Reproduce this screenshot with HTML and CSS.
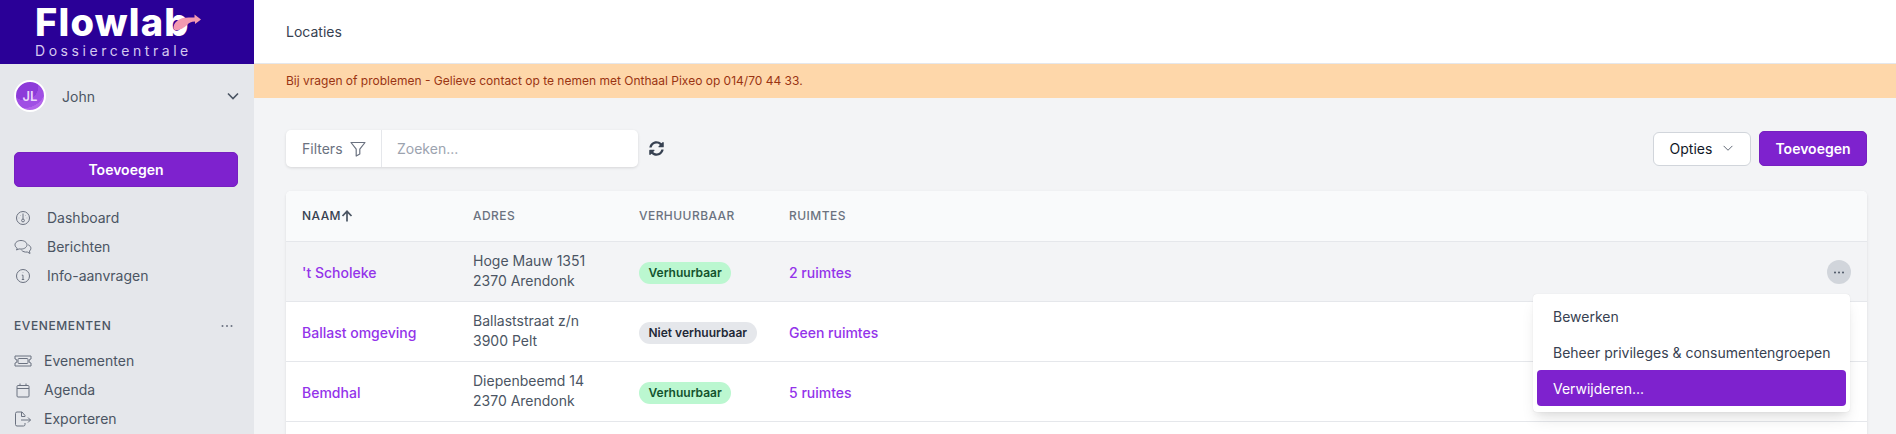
FILE: index.html
```html
<!DOCTYPE html>
<html lang="nl">
<head>
<meta charset="utf-8">
<title>Locaties</title>
<link rel="stylesheet" href="styles.css">
</head>
<body>
<div class="app">
  <aside class="sidebar">
    <div class="brand">
      <div class="brand-name">Flowlab<svg class="brand-arrow" viewBox="0 0 28 18" width="28" height="18"><path d="M.5 14C.5 8 6 5 10 4C14 3 17 3.500 21.500 3.500V.5L28 5.500L22 10V7.500C18 7.500 16 9 14 11C10 15 1.500 19 .5 14Z" fill="#f49ab0"/></svg></div>
      <div class="brand-sub">Dossiercentrale</div>
    </div>
    <div class="user">
      <span class="avatar">JL</span>
      <span class="user-name">John</span>
      <svg class="user-chev" viewBox="0 0 12 8" width="12" height="8"><path d="M1 1.500L6 6.500L11 1.500" fill="none" stroke="#4b5563" stroke-width="1.600"/></svg>
    </div>
    <button class="btn btn-primary btn-side">Toevoegen</button>
    <nav class="nav nav-first">
      <a class="nav-item"><svg class="ic" viewBox="0 0 16 16"><circle cx="8" cy="8" r="6.500"/><path d="M8 3.500V9M5 5l.3.3M11 5l-.3.3M3.800 8h.4M11.800 8h.4"/><circle cx="8" cy="10.500" r="1.400"/></svg>Dashboard</a>
      <a class="nav-item"><svg class="ic ic-wide" viewBox="0 0 18 16"><path d="M7 1.500C3.700 1.500 1 3.400 1 5.800c0 1.400.9 2.600 2.200 3.400L2.500 11l2.600-1.100c.6.1 1.200.2 1.900.2 3.300 0 6-1.900 6-4.300S10.300 1.500 7 1.500Z"/><path d="M14.200 5.800c1.600.8 2.700 2 2.700 3.500 0 1.100-.6 2.100-1.500 2.800l.6 2.400-2.700-1.500c-2.300.4-4.600-.4-5.800-1.800"/></svg>Berichten</a>
      <a class="nav-item"><svg class="ic" viewBox="0 0 16 16"><circle cx="8" cy="8" r="6.500"/><path d="M8 7.200V11.500M6.800 7.200H8M6.800 11.500H9.200M8 4.600v.4"/></svg>Info-aanvragen</a>
    </nav>
    <div class="section-head"><span>EVENEMENTEN</span><svg viewBox="0 0 12 4" width="12" height="4"><circle cx="1.500" cy="2" r="1" class="dot-fill"/><circle cx="6" cy="2" r="1" class="dot-fill"/><circle cx="10.500" cy="2" r="1" class="dot-fill"/></svg></div>
    <nav class="nav nav-events">
      <a class="nav-item nav-item-tight"><svg class="ic ic-wide" viewBox="0 0 18 14"><path d="M1 2h16v3a2 2 0 0 0 0 4v3H1V9a2 2 0 0 0 0-4Z"/><rect x="4" y="4.500" width="10" height="5" rx="1"/></svg>Evenementen</a>
      <a class="nav-item nav-item-tight"><svg class="ic" viewBox="0 0 16 16"><rect x="2" y="3.500" width="12" height="11.500" rx="1"/><path d="M2 6.500H14M5 1.500V3.500M11 1.500V3.500"/></svg>Agenda</a>
      <a class="nav-item nav-item-tight"><svg class="ic ic-wide" viewBox="0 0 18 16"><path d="M11 5.500V4.500L8 1H3a1.500 1.500 0 0 0-1.500 1.500v11A1.500 1.500 0 0 0 3 15h6.500A1.500 1.500 0 0 0 11 13.500V12"/><path d="M7.500 1v4.500H11M7 9H16.500M14 6.500L16.500 9L14 11.500"/></svg>Exporteren</a>
    </nav>
  </aside>
  <main class="main">
    <header class="topbar">Locaties</header>
    <div class="banner">Bij vragen of problemen - Gelieve contact op te nemen met Onthaal Pixeo op 014/70 44 33.</div>
    <div class="content">
      <div class="toolbar">
        <div class="search">
          <div class="filters">Filters<svg viewBox="0 0 16 16" width="16" height="16"><path d="M1 1.500H15L9.800 8.200V13L6.200 15V8.200Z" fill="none" stroke="#6b7280" stroke-width="1.200" stroke-linejoin="round"/></svg></div>
          <div class="search-input">Zoeken...</div>
        </div>
        <svg class="refresh" viewBox="0 0 512 512" width="15" height="15"><path fill="#374151" d="M370.720 133.280C339.458 104.008 298.888 87.962 255.848 88c-77.458.068-144.328 53.178-162.791 126.850-1.344 5.363-6.122 9.150-11.651 9.150H24.103c-7.498 0-13.194-6.807-11.807-14.176C33.933 94.924 134.813 8 256 8c66.448 0 126.791 26.136 171.315 68.685L463.030 40.970C478.149 25.851 504 36.559 504 57.941V192c0 13.255-10.745 24-24 24H345.941c-21.382 0-32.090-25.851-16.971-40.971l41.750-41.749zM32 296h134.059c21.382 0 32.090 25.851 16.971 40.971l-41.750 41.750c31.262 29.273 71.835 45.319 114.876 45.280 77.418-.070 144.315-53.144 162.787-126.849 1.344-5.363 6.122-9.150 11.651-9.150h57.304c7.498 0 13.194 6.807 11.807 14.176C478.067 417.076 377.187 504 256 504c-66.448 0-126.791-26.136-171.315-68.685L48.970 471.030C33.851 486.149 8 475.441 8 454.059V320c0-13.255 10.745-24 24-24z"/></svg>
        <div class="toolbar-spacer"></div>
        <button class="btn btn-options">Opties<svg viewBox="0 0 12 8" width="12" height="7"><path d="M1 1L6 6L11 1" fill="none" stroke="#4b5563" stroke-width="1"/></svg></button>
        <button class="btn btn-primary btn-add">Toevoegen</button>
      </div>
      <div class="card">
        <table class="table">
          <colgroup><col class="c1"><col class="c2"><col class="c3"><col class="c4"><col></colgroup>
          <thead>
            <tr><th class="th-active">NAAM<svg viewBox="0 0 12 12" width="12" height="12"><path d="M6 11.500V1.500M1.500 6L6 1.300L10.500 6" fill="none" stroke="#4b5563" stroke-width="1.700"/></svg></th><th>ADRES</th><th>VERHUURBAAR</th><th>RUIMTES</th><th></th></tr>
          </thead>
          <tbody>
            <tr class="row-hover">
              <td><a class="link">'t Scholeke</a></td>
              <td class="addr">Hoge Mauw 1351<br>2370 Arendonk</td>
              <td><span class="badge badge-green">Verhuurbaar</span></td>
              <td><a class="link">2 ruimtes</a></td>
              <td class="actions"><span class="dots"><svg viewBox="0 0 10 3" width="10" height="3"><circle cx="1" cy="1.500" r="1" class="dot-dark"/><circle cx="5" cy="1.500" r="1" class="dot-dark"/><circle cx="9" cy="1.500" r="1" class="dot-dark"/></svg></span></td>
            </tr>
            <tr>
              <td><a class="link">Ballast omgeving</a></td>
              <td class="addr">Ballaststraat z/n<br>3900 Pelt</td>
              <td><span class="badge badge-gray">Niet verhuurbaar</span></td>
              <td><a class="link">Geen ruimtes</a></td>
              <td></td>
            </tr>
            <tr>
              <td><a class="link">Bemdhal</a></td>
              <td class="addr">Diepenbeemd 14<br>2370 Arendonk</td>
              <td><span class="badge badge-green">Verhuurbaar</span></td>
              <td><a class="link">5 ruimtes</a></td>
              <td></td>
            </tr>
            <tr><td colspan="5"></td></tr>
          </tbody>
        </table>
        <div class="menu">
          <a class="menu-item">Bewerken</a>
          <a class="menu-item">Beheer privileges &amp; consumentengroepen</a>
          <a class="menu-item menu-active">Verwijderen...</a>
        </div>
      </div>
    </div>
  </main>
</div>
</body>
</html>
```
FILE: styles.css
```css
* { box-sizing: border-box; }
html, body { margin: 0; height: 434px; overflow: hidden; }
body { font-family: Inter, "Liberation Sans", sans-serif; font-size: 14px; color: #374151; background: #f3f4f6; }
.app { display: flex; height: 434px; overflow: hidden; }
.sidebar { width: 254px; flex: none; background: #e5e7eb; overflow: hidden; }
.brand { height: 64px; background: #2a0097; padding: 3px 0 0 35px; }
.brand-name { position: relative; font-size: 38px; line-height: 39px; font-weight: 800; color: #fff; letter-spacing: 1.2px; white-space: nowrap; }
.brand-arrow { position: absolute; left: 138px; top: 11px; }
.brand-sub { font-size: 14px; line-height: 16px; letter-spacing: 3.55px; color: #d5c8f0; margin-top: 1px; white-space: nowrap; }
.user { height: 64px; display: flex; align-items: center; padding: 0 14px; }
.avatar { width: 32px; height: 32px; border-radius: 50%; border: 2px solid #fff; background: radial-gradient(circle at 30% 15%, #8d3bd9 0 45%, #a04fe4 46% 70%, #b365ea 71%); color: #ecd8fb; display: flex; align-items: center; justify-content: center; font-size: 13px; font-weight: 600; flex: none; }
.user-name { margin-left: 16px; flex: 1; color: #4b5563; font-size: 14px; }
.user-chev { margin-right: 1px; }
.btn { font-family: inherit; font-size: 14px; border-radius: 5px; cursor: pointer; }
.btn-primary { background: #7e22ce; color: #fff; font-weight: 600; border: 1px solid #7620c0; }
.btn-side { display: block; width: 224px; height: 35px; margin: 24px 0 0 14px; }
.nav { display: flex; flex-direction: column; }
.nav-first { margin-top: 16px; }
.nav-item { display: flex; align-items: center; height: 29px; padding-left: 15px; color: #4b5563; font-size: 14px; }
.ic { width: 16px; height: 16px; margin-right: 16px; fill: none; stroke: #6b7280; stroke-width: 1; flex: none; }
.ic-wide { width: 18px; margin-left: -1px; margin-right: 15px; }
.nav-item-tight .ic { margin-right: 13px; }
.nav-item-tight .ic-wide { margin-right: 12px; }
.section-head { display: flex; justify-content: space-between; align-items: center; padding: 0 21px 0 14px; margin-top: 28px; height: 16px; line-height: 16px; font-size: 12px; font-weight: 500; letter-spacing: 0.6px; color: #4b5563; }
.dot-fill { fill: #6b7280; }
.dot-dark { fill: #4b5563; }
.nav-events { margin-top: 12px; }
.main { flex: 1; min-width: 0; display: flex; flex-direction: column; overflow: hidden; }
.topbar { height: 64px; flex: none; background: #fff; border-bottom: 1px solid #e5e7eb; padding-left: 32px; line-height: 64px; font-size: 14px; color: #374151; }
.banner { height: 34px; flex: none; background: #fed7aa; color: #9a3412; padding-left: 32px; line-height: 34px; font-size: 12px; }
.content { flex: 1; min-height: 0; overflow: hidden; padding: 32px 29px 0 32px; }
.toolbar { display: flex; align-items: center; height: 37px; }
.search { width: 352px; height: 37px; display: flex; background: #fff; border-radius: 5px; box-shadow: 0 1px 3px rgba(0,0,0,.12); }
.filters { width: 96px; display: flex; align-items: center; gap: 7px; padding-left: 16px; border-right: 1px solid #e5e7eb; color: #6b7280; }
.search-input { flex: 1; display: flex; align-items: center; padding-left: 15px; color: #9ca3af; }
.refresh { margin-left: 11px; }
.toolbar-spacer { flex: 1; }
.btn-options { height: 34px; width: 98px; background: #fff; border: 1px solid #d1d5db; border-radius: 6px; color: #111827; display: flex; align-items: center; justify-content: center; gap: 10px; }
.btn-add { height: 35px; width: 108px; margin-left: 8px; }
.card { position: relative; margin-top: 24px; background: #fff; border-radius: 5px; box-shadow: 0 1px 3px rgba(0,0,0,.1); }
.table { width: 100%; border-collapse: collapse; table-layout: fixed; }
.c1 { width: 171px; } .c2 { width: 166px; } .c3 { width: 150px; } .c4 { width: 300px; }
th { height: 50px; padding: 0 0 0 16px; background: #f9fafb; text-align: left; font-size: 12px; font-weight: 500; letter-spacing: 0.45px; color: #6b7280; border-bottom: 1px solid #e5e7eb; }
th:first-child { border-top-left-radius: 5px; }
th:last-child { border-top-right-radius: 5px; }
.th-active { color: #374151; }
.th-active svg { vertical-align: -2px; }
td { height: 60px; padding: 4px 0 0 16px; border-bottom: 1px solid #e5e7eb; font-size: 14px; line-height: 20px; color: #4b5563; }
td.addr { padding-top: 0; }
.row-hover td { background: #f3f4f6; }
.link { color: #9333ea; font-weight: 500; }
.badge { display: inline-block; height: 22px; line-height: 22px; padding: 0 9.5px; border-radius: 11px; font-size: 12px; font-weight: 600; }
.badge-green { background: #bbf7d0; color: #14532d; }
.badge-gray { background: #e5e7eb; color: #1f2937; }
td.actions { text-align: right; padding: 2px 16px 0 0; }
.dots { display: inline-flex; width: 24px; height: 24px; border-radius: 50%; align-items: center; justify-content: center; background: #d1d5db; vertical-align: middle; }
.menu { position: absolute; left: 1247px; top: 103px; width: 317px; height: 118px; padding: 4px; background: #fff; border-radius: 4px; box-shadow: 0 10px 15px -3px rgba(0,0,0,.1), 0 4px 6px -2px rgba(0,0,0,.05), 0 0 1px rgba(0,0,0,.15); }
.menu-item { display: flex; align-items: center; height: 36px; padding-left: 16px; border-radius: 4px; color: #374151; font-size: 14px; }
.menu-active { background: #7e22ce; color: #fff; }
```
